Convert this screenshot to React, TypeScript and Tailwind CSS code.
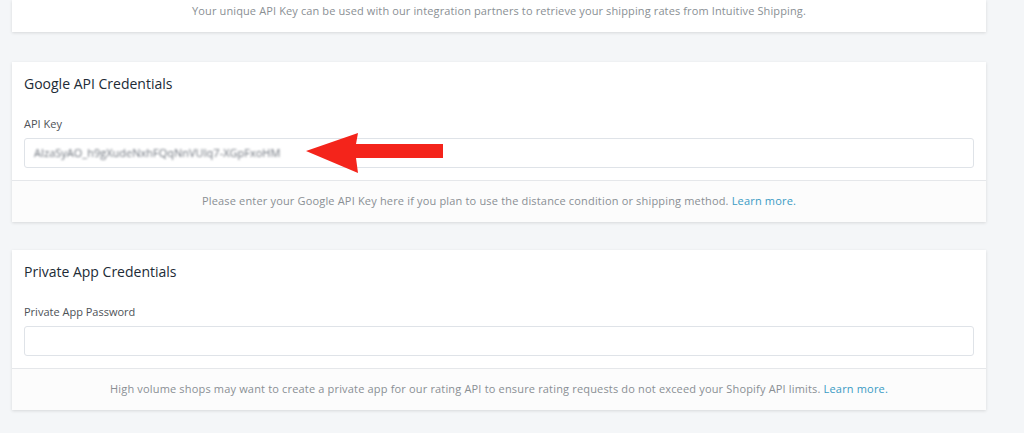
import React from "react";

export default function App() {
  return (
    <div className="relative w-[1024px] h-[433px] overflow-hidden bg-[#f4f6f8]" style={{ fontFamily: '"Open Sans", "Noto Sans", sans-serif' }}>
      <div className="w-[974px] ml-[12px] flex flex-col">
        <div className="bg-white shadow-[0_1px_3px_rgba(0,0,0,0.12)] h-[32px] flex items-start justify-center pt-[3px]">
          <p className="text-[11px] text-[#8a8f94] tracking-[0.12px]">Your unique API Key can be used with our integration partners to retrieve your shipping rates from Intuitive Shipping.</p>
        </div>

        <div className="mt-[30px] bg-white shadow-[0_1px_3px_rgba(0,0,0,0.12)]">
          <div className="px-[12px] pt-[12px] pb-[12px]">
            <h2 className="text-[14px] text-[#212b36] leading-[20px]">Google API Credentials</h2>
            <div className="mt-[22px] text-[11px] text-[#4d5257] leading-[16px]">API Key</div>
            <div className="mt-[6px] h-[30px] border border-[#dfe3e8] rounded-[3px] flex items-center px-[9px]">
              <span className="text-[11px] text-[#6f757e] blur-[1.3px] select-none">AIzaSyAO_h9gXudeNxhFQqNnVUIq7-XGpFxoHM</span>
            </div>
          </div>
          <div className="border-t border-[#e5e7ea] bg-[#fcfcfc] h-[42px] flex items-center justify-center">
            <p className="text-[11px] text-[#8a8f94] tracking-[0.17px]">Please enter your Google API Key here if you plan to use the distance condition or shipping method. <span className="text-[#3a9bc4]">Learn more.</span></p>
          </div>
        </div>

        <div className="mt-[28px] bg-white shadow-[0_1px_3px_rgba(0,0,0,0.12)]">
          <div className="px-[12px] pt-[12px] pb-[12px]">
            <h2 className="text-[14px] text-[#212b36] leading-[20px]">Private App Credentials</h2>
            <div className="mt-[22px] text-[11px] text-[#4d5257] leading-[16px]">Private App Password</div>
            <div className="mt-[6px] h-[30px] border border-[#dfe3e8] rounded-[3px]" />
          </div>
          <div className="border-t border-[#e5e7ea] bg-[#fcfcfc] h-[42px] flex items-center justify-center">
            <p className="text-[11px] text-[#8a8f94] tracking-[0.17px]">High volume shops may want to create a private app for our rating API to ensure rating requests do not exceed your Shopify API limits. <span className="text-[#3a9bc4]">Learn more.</span></p>
          </div>
        </div>
      </div>

      <svg className="absolute left-[304px] top-[130px]" width="142" height="46" viewBox="0 0 142 46">
        <polygon points="2,21 54,3 52,14 139,14 139,28 52,28 54,43" fill="#f4241b" />
      </svg>
    </div>
  );
}
